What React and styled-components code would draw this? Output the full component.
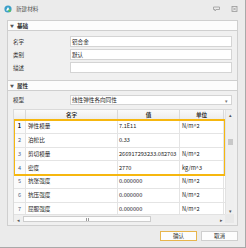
import React from 'react';
import styled, { createGlobalStyle } from 'styled-components';

const Global = createGlobalStyle`
  html, body { margin: 0; padding: 0; background: #e6e6e6; }
  * { box-sizing: border-box; }
`;

const basicFields = [
  { label: '名字', value: '铝合金' },
  { label: '类别', value: '默认' },
  { label: '描述', value: '' },
];

const props = [
  { name: '弹性模量', value: '7.1E11', unit: 'N/m^2' },
  { name: '泊松比', value: '0.33', unit: '' },
  { name: '剪切模量', value: '266917293233.082703', unit: 'N/m^2' },
  { name: '密度', value: '2770', unit: 'kg/m^3' },
  { name: '抗张强度', value: '0.000000', unit: 'N/m^2' },
  { name: '抗压强度', value: '0.000000', unit: 'N/m^2' },
  { name: '屈服强度', value: '0.000000', unit: 'N/m^2' },
];

function App() {
  const picked = props.slice(0, 4);
  const rest = props.slice(4);

  const renderRow = (p, i) => (
    <Row key={p.name}>
      <NumCell $active={i === 0}>{i + 1}</NumCell>
      <Cell>{p.name}</Cell>
      <Cell $tight>{p.value}</Cell>
      <Cell>{p.unit}</Cell>
    </Row>
  );

  return (
    <>
      <Global />
      <Window>
        <TitleBar>
          <AppIcon viewBox="0 0 8 8">
            <circle cx="4" cy="4" r="3.6" fill="#3b9fc9" />
            <path d="M2 5.5 L4 2 L6 5.5 Z" fill="#ffffff" />
            <circle cx="5.6" cy="5.6" r="1.4" fill="#5cc35a" />
          </AppIcon>
          <Title>新建材料</Title>
          <Spacer />
          <TitleIcon viewBox="0 0 7 5">
            <path d="M0.5 0.5 H6.5 V3 H3 L2 4.5 V3 H0.5 Z" fill="none" stroke="#9a9a9a" strokeWidth="0.8" />
          </TitleIcon>
          <TitleIcon viewBox="0 0 6 6">
            <rect x="0.5" y="0.5" width="5" height="5" fill="none" stroke="#9a9a9a" strokeWidth="0.8" />
            <path d="M1.6 1.6 L4.4 4.4 M4.4 1.6 L1.6 4.4" stroke="#9a9a9a" strokeWidth="0.8" />
          </TitleIcon>
        </TitleBar>

        <Groups>
          <GroupHeader>
            <Caret>▼</Caret>基础
          </GroupHeader>
          <GroupBody $basic>
            <FormGrid>
              {basicFields.map(f => (
                <React.Fragment key={f.label}>
                  <Label>{f.label}</Label>
                  <Input>{f.value}</Input>
                </React.Fragment>
              ))}
            </FormGrid>
          </GroupBody>

          <GroupHeader>
            <Caret>▼</Caret>属性
          </GroupHeader>
          <GroupBody>
            <FormGrid>
              <Label>模型</Label>
              <Combo>
                线性弹性各向同性
                <ComboArrow>▾</ComboArrow>
              </Combo>
            </FormGrid>
            <Table>
              <TableMain>
                <HeadRow>
                  <HeadCell />
                  <HeadCell>名字</HeadCell>
                  <HeadCell>值</HeadCell>
                  <HeadCell>单位</HeadCell>
                </HeadRow>
                <Picked>{picked.map((p, i) => renderRow(p, i))}</Picked>
                {rest.map((p, i) => renderRow(p, i + 4))}
              </TableMain>
              <VScroll>
                <ScrollArrow>▴</ScrollArrow>
                <VTrack>
                  <VThumb />
                </VTrack>
                <ScrollArrow>▾</ScrollArrow>
              </VScroll>
              <HScroll>
                <ScrollArrow>◂</ScrollArrow>
                <HTrack>
                  <HThumb>
                    <Grip />
                  </HThumb>
                </HTrack>
                <ScrollArrow>▸</ScrollArrow>
              </HScroll>
              <Corner />
            </Table>
          </GroupBody>
        </Groups>

        <Footer>
          <Button $primary>确认</Button>
          <Button>取消</Button>
        </Footer>
      </Window>
    </>
  );
}

export default App;

const Window = styled.div`
  width: 246px;
  height: 248px;
  background: #ebebeb;
  border-right: 1px solid #a9a9a9;
  border-bottom: 1px solid #a9a9a9;
  display: flex;
  flex-direction: column;
  font-family: "Noto Sans CJK SC", "Liberation Sans", sans-serif;
  font-size: 5.6px;
  color: #333;
  overflow: hidden;
`;

const TitleBar = styled.div`
  height: 20px;
  display: flex;
  align-items: center;
  padding: 0 7px 2px 4px;
  gap: 3px;
`;

const AppIcon = styled.svg`
  width: 8px;
  height: 8px;
`;

const Title = styled.span`
  font-size: 5.6px;
  color: #555;
  margin-left: 1px;
`;

const Spacer = styled.div`
  flex: 1;
`;

const TitleIcon = styled.svg`
  width: 7px;
  height: 6px;
  margin-left: 8px;
`;

const Groups = styled.div`
  margin: 0 7px;
  display: flex;
  flex-direction: column;
`;

const GroupHeader = styled.div`
  height: 11px;
  background: #fcfcfc;
  border: 1px solid #cfcfcf;
  display: flex;
  align-items: center;
  padding-left: 2px;
  font-weight: bold;
  color: #333;
`;

const Caret = styled.span`
  font-size: 4px;
  color: #555;
  margin-right: 3px;
`;

const GroupBody = styled.div`
  background: #f0f0f0;
  border-left: 1px solid #cfcfcf;
  border-right: 1px solid #cfcfcf;
  border-bottom: ${p => (p.$basic ? 'none' : '1px solid #cfcfcf')};
  padding: ${p => (p.$basic ? '5px 5px 7px 5px' : '4px 5px 4px 5px')};
  height: ${p => (p.$basic ? '49px' : '135px')};
`;

const FormGrid = styled.div`
  display: grid;
  grid-template-columns: 57px 1fr;
  row-gap: 2px;
  align-items: center;
`;

const Label = styled.div`
  color: #333;
`;

const Input = styled.div`
  height: 11px;
  background: #fff;
  border: 1px solid #d4d4d4;
  display: flex;
  align-items: center;
  padding-left: 1px;
  color: #222;
`;

const Combo = styled(Input)`
  height: 10px;
  justify-content: space-between;
  padding-right: 3px;
`;

const ComboArrow = styled.span`
  font-size: 5px;
  color: #777;
`;

const Table = styled.div`
  margin-top: 4px;
  height: 113px;
  display: grid;
  grid-template-columns: 211px 9px;
  grid-template-rows: 104px 9px;
  background: #fff;
  border: 1px solid #dadada;
`;

const TableMain = styled.div`
  overflow: hidden;
`;

const cols = '12px 92px 62px 44px';

const HeadRow = styled.div`
  display: grid;
  grid-template-columns: ${cols};
  height: 10px;
  background: linear-gradient(#fafafa, #ededed);
  border-bottom: 1px solid #d6d6d6;
`;

const HeadCell = styled.div`
  display: flex;
  align-items: center;
  justify-content: center;
  border-right: 1px solid #d9d9d9;
  color: #333;
  font-weight: bold;
`;

const Picked = styled.div`
  outline: 2px solid #f6b70f;
  outline-offset: -1px;
  position: relative;
  z-index: 1;
`;

const Row = styled.div`
  display: grid;
  grid-template-columns: ${cols};
  height: 13.75px;
  border-bottom: 1px solid #e4e4e4;
`;

const Cell = styled.div`
  display: flex;
  align-items: center;
  padding-left: ${p => (p.$tight ? '1px' : '2px')};
  border-right: 1px solid #e4e4e4;
  white-space: nowrap;
  overflow: hidden;
  color: #222;
`;

const NumCell = styled(Cell)`
  justify-content: center;
  padding-left: 0;
  background: #fbfbfb;
  font-weight: ${p => (p.$active ? 'bold' : 'normal')};
  color: ${p => (p.$active ? '#111' : '#4d5d7d')};
`;

const VScroll = styled.div`
  background: #efefef;
  border-left: 1px solid #e2e2e2;
  display: flex;
  flex-direction: column;
`;

const ScrollArrow = styled.div`
  height: 8px;
  min-width: 8px;
  display: flex;
  align-items: center;
  justify-content: center;
  font-size: 5px;
  color: #555;
`;

const VTrack = styled.div`
  flex: 1;
  padding-top: 21px;
  display: flex;
  justify-content: center;
`;

const VThumb = styled.div`
  width: 5px;
  height: 6px;
  background: #c8c8c8;
`;

const HScroll = styled.div`
  background: #efefef;
  border-top: 1px solid #e2e2e2;
  display: flex;
  align-items: center;
`;

const HTrack = styled.div`
  flex: 1;
  height: 100%;
  display: flex;
  align-items: center;
  padding-left: 1px;
`;

const HThumb = styled.div`
  width: 128px;
  height: 6px;
  background: #fdfdfd;
  border: 1px solid #cdcdcd;
  display: flex;
  align-items: center;
  justify-content: center;
`;

const Grip = styled.div`
  width: 3px;
  height: 3px;
  border-left: 1px solid #999;
  border-right: 1px solid #999;
`;

const Corner = styled.div`
  background: #e8e8e8;
`;

const Footer = styled.div`
  display: flex;
  justify-content: flex-end;
  gap: 4px;
  padding: 5px 7px 0 0;
`;

const Button = styled.div`
  width: 37px;
  height: 10px;
  display: flex;
  align-items: center;
  justify-content: center;
  background: #fdfdfd;
  border: 1px solid ${p => (p.$primary ? '#e7b54d' : '#cfcfcf')};
  color: #333;
`;
